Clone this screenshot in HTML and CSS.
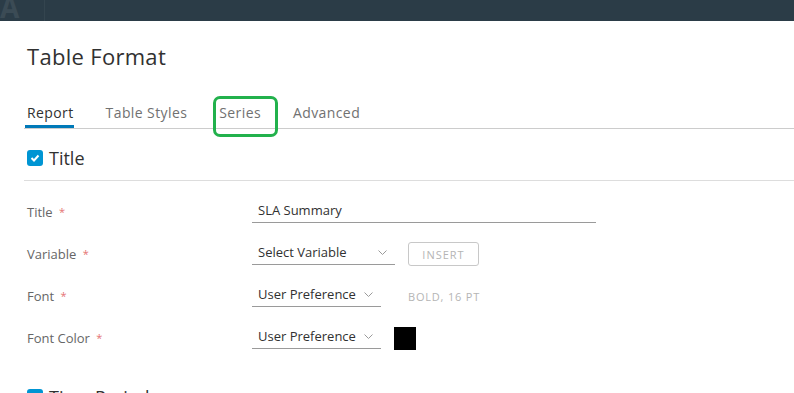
FILE: index.html
```html
<!DOCTYPE html>
<html lang="en">
<head>
    <meta charset="UTF-8">
    <title>Table Format</title>
    <link rel="stylesheet" href="styles.css">
</head>
<body>
    <div class="topbar">
        <span class="brand">A</span>
        <span class="divider"></span>
    </div>

    <div class="modal">
        <h1 class="modal-title">Table Format</h1>

        <div class="tabs">
            <span class="tab active">Report</span>
            <span class="tab">Table Styles</span>
            <span class="tab highlighted">Series</span>
            <span class="tab">Advanced</span>
        </div>

        <!-- Title section -->
        <div class="section-head">
            <span class="checkbox">
                <svg width="10" height="8" viewBox="0 0 10 8"><polyline points="1.5,4 4,6.5 8.5,1.5" fill="none" stroke="#fff" stroke-width="2"/></svg>
            </span>
            <span class="section-name">Title</span>
        </div>

        <div class="form-rows">
            <div class="form-row">
                <label class="form-label">Title <span class="req">*</span></label>
                <div class="control">
                    <div class="text-input wide">SLA Summary</div>
                </div>
            </div>

            <div class="form-row">
                <label class="form-label">Variable <span class="req">*</span></label>
                <div class="control">
                    <div class="select sel-variable">
                        <span>Select Variable</span>
                        <svg class="chev" width="9" height="5" viewBox="0 0 9 5"><polyline points="0.5,0.5 4.5,4.5 8.5,0.5" fill="none" stroke="#9a9a9a" stroke-width="1"/></svg>
                    </div>
                    <button class="btn-outline">INSERT</button>
                </div>
            </div>

            <div class="form-row">
                <label class="form-label">Font <span class="req">*</span></label>
                <div class="control">
                    <div class="select sel-pref">
                        <span>User Preference</span>
                        <svg class="chev" width="9" height="5" viewBox="0 0 9 5"><polyline points="0.5,0.5 4.5,4.5 8.5,0.5" fill="none" stroke="#9a9a9a" stroke-width="1"/></svg>
                    </div>
                    <span class="hint">BOLD, 16 PT</span>
                </div>
            </div>

            <div class="form-row">
                <label class="form-label">Font Color <span class="req">*</span></label>
                <div class="control">
                    <div class="select sel-pref">
                        <span>User Preference</span>
                        <svg class="chev" width="9" height="5" viewBox="0 0 9 5"><polyline points="0.5,0.5 4.5,4.5 8.5,0.5" fill="none" stroke="#9a9a9a" stroke-width="1"/></svg>
                    </div>
                    <span class="swatch"></span>
                </div>
            </div>
        </div>

        <!-- Time Period section (runs past the bottom edge) -->
        <div class="section-head next">
            <span class="checkbox">
                <svg width="10" height="8" viewBox="0 0 10 8"><polyline points="1.5,4 4,6.5 8.5,1.5" fill="none" stroke="#fff" stroke-width="2"/></svg>
            </span>
            <span class="section-name">Time Period</span>
        </div>
    </div>
</body>
</html>
```

FILE: styles.css
```css
body {
    margin: 0;
    padding: 0;
    font-family: 'Open Sans', 'Liberation Sans', sans-serif;
    background: #ffffff;
    width: 794px;
    height: 393px;
    overflow: hidden;
}

.topbar {
    height: 21px;
    background: #2b3c47;
    position: relative;
    overflow: hidden;
}

.topbar .brand {
    position: absolute;
    left: 0;
    top: -12px;
    font-size: 28px;
    font-weight: 700;
    color: #3b4b55;
}

.topbar .divider {
    position: absolute;
    left: 44px;
    top: 0;
    width: 1px;
    height: 21px;
    background: #34454f;
}

.modal {
    padding-left: 24px;
}

.modal-title {
    margin: 0;
    padding: 20px 0 0 3px;
    height: 55px;
    box-sizing: border-box;
    font-size: 22px;
    line-height: 30px;
    font-weight: 400;
    letter-spacing: 0.3px;
    color: #313131;
}

.tabs {
    display: flex;
    gap: 32px;
    margin-top: 27px;
    padding-left: 1px;
    border-bottom: 1px solid #cccccc;
}

.tab {
    position: relative;
    font-size: 14px;
    line-height: 20px;
    letter-spacing: 0.4px;
    padding: 0 0 5px 0;
    color: #717171;
}

.tab.active {
    padding-left: 2px;
    color: #313131;
    box-shadow: inset 0 -3px 0 #0079b8;
}

.tab.highlighted::after {
    content: '';
    position: absolute;
    left: -6px;
    top: -7px;
    width: 59px;
    height: 35px;
    border: 3px solid #22b14c;
    border-radius: 7px;
}

.section-head {
    display: flex;
    align-items: center;
    gap: 6px;
    padding: 19px 0 12px 3px;
    border-bottom: 1px solid #dddddd;
}

.section-head.next {
    border-bottom: none;
    padding-top: 28px;
}

.checkbox {
    width: 16px;
    height: 16px;
    border-radius: 3px;
    background: #0095d3;
    display: flex;
    align-items: center;
    justify-content: center;
}

.section-name {
    font-size: 18px;
    line-height: 20px;
    color: #313131;
}

.form-rows {
    padding-top: 10px;
}

.form-row {
    display: grid;
    grid-template-columns: 225px 1fr;
    align-items: center;
    height: 42px;
    padding-left: 3px;
}

.form-label {
    font-size: 13px;
    color: #666666;
}

.req {
    color: #e57373;
    font-size: 11px;
    margin-left: 3px;
    vertical-align: 1px;
}

.control {
    display: flex;
    align-items: center;
    gap: 13px;
}

.text-input,
.select {
    font-size: 13px;
    line-height: 18px;
    color: #313131;
    padding: 0 0 3px 6px;
    border-bottom: 1px solid #9a9a9a;
    box-sizing: border-box;
}

.text-input.wide {
    width: 344px;
}

.select {
    display: flex;
    align-items: center;
    justify-content: space-between;
    padding-right: 8px;
}

.sel-variable {
    width: 143px;
}

.sel-pref {
    width: 129px;
}

.btn-outline {
    width: 71px;
    height: 24px;
    border: 1px solid #c8c8c8;
    border-radius: 3px;
    background: #ffffff;
    color: #b5b5b5;
    font-family: inherit;
    font-size: 11px;
    letter-spacing: 1px;
    padding: 0;
}

.hint {
    font-size: 11px;
    letter-spacing: 0.8px;
    color: #b5b5b5;
    margin-left: 14px;
}

.swatch {
    width: 22px;
    height: 23px;
    background: #000000;
    align-self: flex-end;
}
```
